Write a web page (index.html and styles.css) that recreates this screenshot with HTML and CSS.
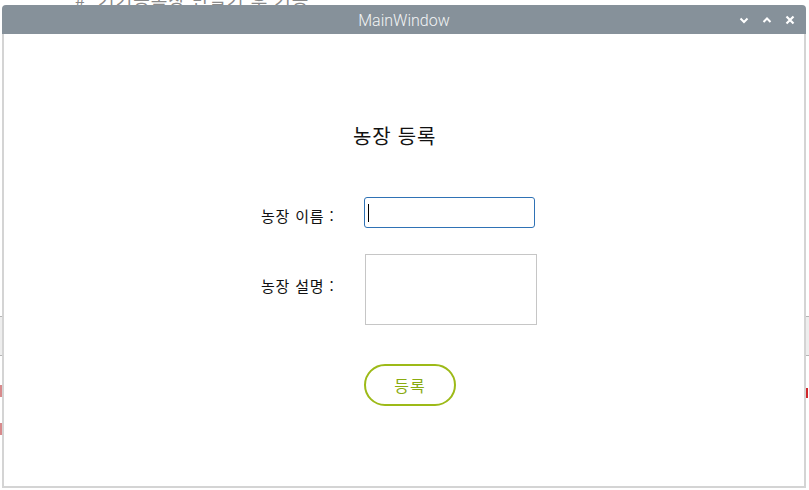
FILE: index.html
```html
<!DOCTYPE html>
<html lang="ko">
<head>
<meta charset="utf-8">
<link rel="stylesheet" href="styles.css">
</head>
<body>
<div class="desktop">
  <div class="bg-text">#&nbsp; 기기등록창 만들기 후 기능</div>
  <div class="bg-band"></div>
  <div class="bg-mark bg-mark-left"></div>
  <div class="bg-mark bg-mark-left2"></div>
  <div class="bg-mark bg-mark-right"></div>
</div>
<div class="window">
  <div class="titlebar">
    <span class="title">MainWindow</span>
    <div class="controls">
      <svg width="10" height="8" viewBox="0 0 10 8"><path d="M1.5 2.5 L5 6 L8.5 2.5" fill="none" stroke="#fff" stroke-width="2"/></svg>
      <svg width="10" height="8" viewBox="0 0 10 8"><path d="M1.5 6 L5 2.5 L8.5 6" fill="none" stroke="#fff" stroke-width="2"/></svg>
      <svg width="10" height="10" viewBox="0 0 10 10"><path d="M1.5 1.5 L8.5 8.5 M8.5 1.5 L1.5 8.5" fill="none" stroke="#fff" stroke-width="2.2"/></svg>
    </div>
  </div>
  <div class="client">
    <h1 class="heading">농장 등록</h1>
    <div class="form">
      <label class="label label-name">농장 이름 :</label>
      <div class="input"><span class="caret"></span></div>
      <label class="label label-desc">농장 설명 :</label>
      <div class="textarea"></div>
      <span></span>
      <button class="submit">등록</button>
    </div>
  </div>
</div>
</body>
</html>
```

FILE: styles.css
```css
html, body {
  margin: 0;
  padding: 0;
  background: #ffffff;
  font-family: "Noto Sans CJK KR", "Noto Sans", sans-serif;
  overflow: hidden;
}

.desktop {
  position: relative;
  width: 809px;
  height: 490px;
}

.bg-text {
  position: absolute;
  left: 75px;
  top: -11px;
  font-size: 18px;
  line-height: 20px;
  color: #8a8a8a;
  letter-spacing: 1px;
}

.bg-band {
  position: absolute;
  left: 0;
  top: 316px;
  width: 809px;
  height: 38px;
  background: #eeeeee;
  border-top: 1px solid #b5b5b5;
  border-bottom: 1px solid #b5b5b5;
}

.bg-mark {
  position: absolute;
  width: 2px;
  background: #d0282b;
}

.bg-mark-left {
  left: 0;
  top: 385px;
  height: 12px;
  background: #d88a8c;
}

.bg-mark-left2 {
  left: 0;
  top: 423px;
  height: 12px;
  background: #d88a8c;
}

.bg-mark-right {
  left: 806px;
  top: 388px;
  height: 10px;
}

.window {
  position: absolute;
  left: 2px;
  top: 5px;
  width: 804px;
  height: 483px;
  display: flex;
  flex-direction: column;
}

.titlebar {
  height: 29px;
  background: #86919a;
  border-radius: 4px 4px 0 0;
  position: relative;
  display: flex;
  align-items: center;
  justify-content: center;
}

.title {
  font-family: Roboto, "Noto Sans", sans-serif;
  font-weight: 300;
  font-size: 16px;
  color: #f2f4f5;
  padding-top: 2px;
}

.controls {
  position: absolute;
  right: 11px;
  top: 10px;
  display: flex;
  align-items: center;
  gap: 13px;
}

.client {
  flex: 1;
  background: #ffffff;
  border-style: solid;
  border-width: 0 2px 2px 2px;
  border-color: #d4d4d4;
  display: flex;
  flex-direction: column;
}

.heading {
  margin: 90px 0 0 349px;
  font-size: 20px;
  font-weight: 400;
  line-height: 24px;
  letter-spacing: 0.8px;
  color: #111111;
}

.form {
  margin: 49px 0 0 257px;
  display: grid;
  grid-template-columns: 75px 172px;
  column-gap: 28px;
  align-items: start;
}

.label {
  font-size: 15px;
  color: #111111;
  line-height: 20px;
  letter-spacing: 0.8px;
  white-space: nowrap;
}

.label-name {
  padding-top: 9px;
}

.input {
  width: 171px;
  height: 31px;
  border: 1px solid #2f72b5;
  border-radius: 3px;
  box-sizing: border-box;
  display: flex;
  align-items: center;
  padding-left: 3px;
}

.caret {
  width: 1px;
  height: 18px;
  background: #000000;
}

.label-desc {
  margin-top: 26px;
  padding-top: 22px;
}

.textarea {
  margin-top: 26px;
  margin-left: 1px;
  width: 172px;
  height: 71px;
  border: 1px solid #c6c6c6;
  box-sizing: border-box;
}

.submit {
  margin-top: 39px;
  width: 92px;
  height: 42px;
  border: 2px solid #9dba18;
  border-radius: 21px;
  background: #ffffff;
  color: #8aab10;
  font-family: "Noto Sans CJK KR", sans-serif;
  font-size: 16px;
  letter-spacing: 1px;
  padding: 0;
}
```
